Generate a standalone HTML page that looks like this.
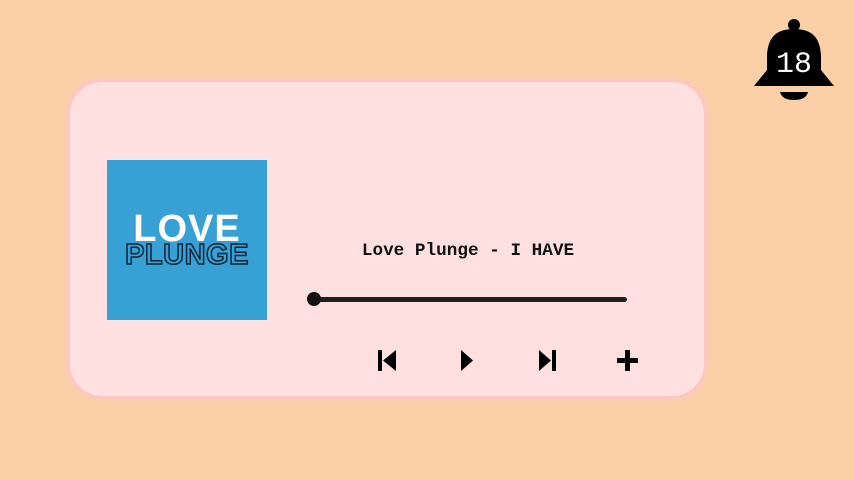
<!DOCTYPE html>
<html><head><style>
body{margin:0;width:854px;height:480px;background:#fbd0a6;position:relative;overflow:hidden;font-family:"Liberation Sans",sans-serif}
.card{position:absolute;left:70px;top:82px;width:634px;height:314px;background:#ffe0e0;border-radius:32px;box-shadow:0 0 6px 3px #fcc4cc}
.art{position:absolute;left:107px;top:160px;width:160px;height:160px;background:#37a1d6}
.love{position:absolute;left:0;width:160px;top:50px;text-align:center;color:#fff;font-weight:bold;font-size:38px;line-height:38px;letter-spacing:1px}
.plunge{position:absolute;left:0;width:160px;top:81px;text-align:center;color:#37a1d6;font-weight:bold;font-size:29px;line-height:29px;letter-spacing:0.5px;-webkit-text-stroke:1.5px #0a2233}
.title{position:absolute;left:300px;width:336px;top:241px;text-align:center;font-family:"Liberation Mono",monospace;font-weight:bold;font-size:17.7px;color:#111}
.bar{position:absolute;left:314px;top:297px;width:313px;height:5px;background:#1e1e1e;border-radius:3px}
.thumb{position:absolute;left:307px;top:292px;width:14px;height:14px;border-radius:50%;background:#111}
</style></head><body>
<div class="card"></div>
<div class="art"><div class="love">LOVE</div><div class="plunge">PLUNGE</div></div>
<div class="title">Love Plunge - I HAVE</div>
<div class="bar"></div><div class="thumb"></div>
<svg style="position:absolute;left:0;top:0" width="854" height="480">
<rect x="378" y="350" width="4" height="21"/><path d="M396 350 V371 L383 360.5Z"/>
<path d="M461 350 V371 L473 360.5Z"/>
<path d="M539 350 V371 L551 360.5Z"/><rect x="552" y="350" width="4" height="21"/>
<rect x="617" y="358" width="21" height="5"/><rect x="625" y="350" width="5" height="21"/>
<circle cx="794" cy="25" r="6"/>
<path d="M794 29 C772 29 768 42 767 55 L767 70 L754 86 L834 86 L821 70 L821 55 C820 42 816 29 794 29Z"/>
<path d="M780 92 H808 Q806 100 794 100 Q782 100 780 92Z"/>
<text x="794" y="72" text-anchor="middle" fill="#fff" font-family="Liberation Mono,monospace" font-size="30">18</text>
</svg>
</body></html>
